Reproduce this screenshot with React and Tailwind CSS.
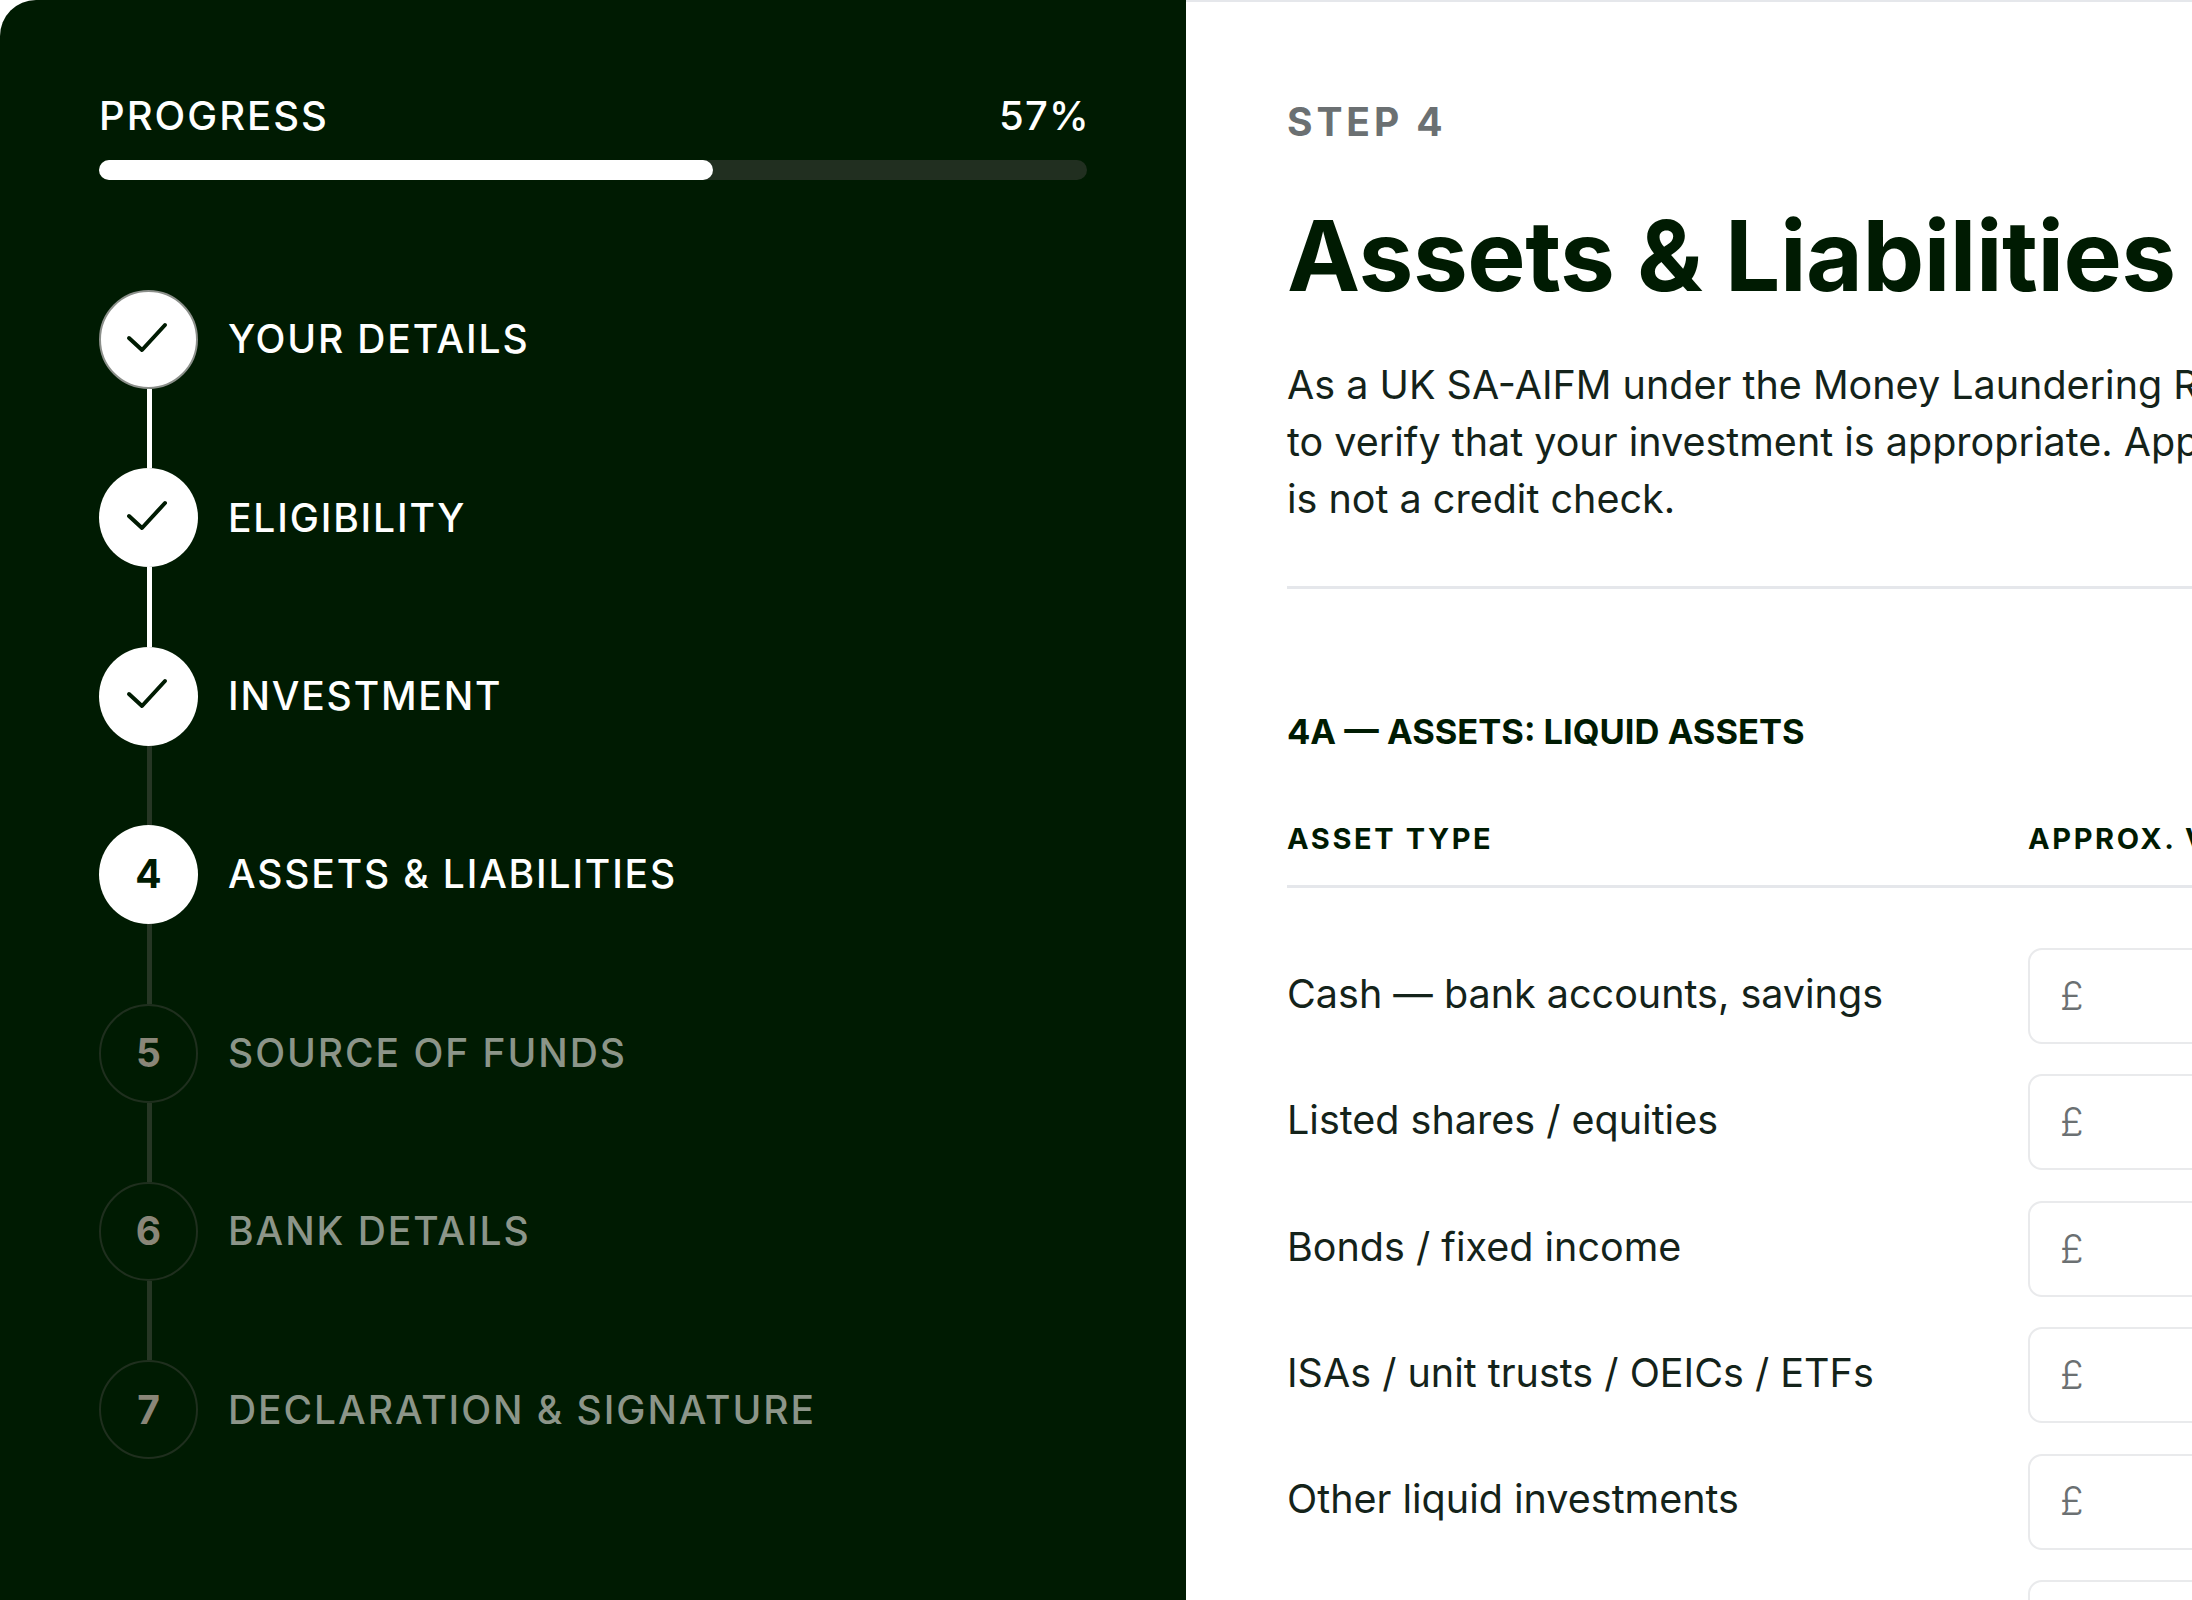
import React from "react";

const steps = [
  { n: 1, label: "YOUR DETAILS", state: "done", ring: true },
  { n: 2, label: "ELIGIBILITY", state: "done" },
  { n: 3, label: "INVESTMENT", state: "done" },
  { n: 4, label: "ASSETS & LIABILITIES", state: "current" },
  { n: 5, label: "SOURCE OF FUNDS", state: "todo" },
  { n: 6, label: "BANK DETAILS", state: "todo" },
  { n: 7, label: "DECLARATION & SIGNATURE", state: "todo" },
];

const assets = [
  "Cash — bank accounts, savings",
  "Listed shares / equities",
  "Bonds / fixed income",
  "ISAs / unit trusts / OEICs / ETFs",
  "Other liquid investments",
];

const Check = () => (
  <svg className="w-[42px] h-[31px] -ml-[3px] -mt-[5px]" viewBox="0 0 42 31" fill="none">
    <path d="M3 16 L16 28 L39 3" stroke="#001b02" strokeWidth="4" strokeLinecap="round" strokeLinejoin="round" />
  </svg>
);

const Step = ({ step, last, lineOn }) => {
  const todo = step.state === "todo";
  return (
    <div className="flex gap-[30px]">
      <div className="flex flex-col w-[99px]">
        <div
          className={
            todo
              ? "w-[99px] h-[99px] rounded-full border-2 border-[#1f2f1e] flex items-center justify-center text-[39px] font-bold text-[#8a8678]"
              : step.ring
              ? "w-[99px] h-[99px] rounded-full bg-white border-2 border-[#8b8f8a] flex items-center justify-center text-[39px] font-bold text-[#001b02]"
              : "w-[99px] h-[99px] rounded-full bg-white flex items-center justify-center text-[39px] font-bold text-[#001b02]"
          }
        >
          {step.state === "done" ? <Check /> : step.n}
        </div>
        {!last && (
          <div className={lineOn ? "w-[5px] h-[79.4px] ml-[48px] bg-white" : "w-[5px] h-[79.4px] ml-[48px] bg-[#263624]"} />
        )}
      </div>
      <div className={todo ? "h-[99px] flex items-center text-[39px] font-medium tracking-[0.05em] text-[#8c9589]" : "h-[99px] flex items-center text-[39px] font-medium tracking-[0.047em] text-white"}>
        {step.label}
      </div>
    </div>
  );
};

export default function App() {
  return (
    <div className="w-[2192px] h-[1600px] flex overflow-hidden bg-white font-['Inter',sans-serif]">
      {/* Sidebar */}
      <div className="w-[1186px] h-full shrink-0 bg-[#001b02] rounded-tl-[36px] pl-[99px] pr-[99px] pt-[92px]">
        <div className="flex justify-between text-[40px] leading-[48px] font-medium tracking-[0.05em] text-white">
          <span>PROGRESS</span>
          <span className="-mr-[3px] tracking-[0.03em]">57%</span>
        </div>
        <div className="mt-[20px] h-[20px] rounded-full bg-[#212f20]">
          <div className="w-[614px] h-[20px] rounded-full bg-white" />
        </div>
        <div className="mt-[110px]">
          {steps.map((s, i) => (
            <Step key={s.n} step={s} last={i === steps.length - 1} lineOn={i < 2} />
          ))}
        </div>
      </div>

      {/* Form */}
      <div className="flex-1 h-full overflow-hidden border-t-2 border-[#e5e7eb] pl-[101px] pt-[96px]">
        <div className="w-[1300px]">
          <p className="text-[39px] leading-[48px] font-bold tracking-[0.1em] text-[#6b7072]">STEP 4</p>
          <h1 className="mt-[55px] text-[98px] leading-[110px] font-bold tracking-[-0.005em] text-[#001b02]">Assets &amp; Liabilities</h1>
          <p className="mt-[46px] text-[39.5px] leading-[57px] text-[#14231a] whitespace-nowrap">
            As a UK SA-AIFM under the Money Laundering Regulations, we are required
            <br />
            to verify that your investment is appropriate. Approximate figures are fine — this
            <br />
            is not a credit check.
          </p>
          <div className="mt-[58px] h-[3px] bg-[#e5e7eb]" />

          <h2 className="mt-[121px] text-[34.5px] leading-[44px] font-bold text-[#001b02]">4A — ASSETS: LIQUID ASSETS</h2>

          <div className="mt-[65px] grid grid-cols-[741px_1fr] text-[29px] leading-[40px] font-bold tracking-[0.09em] text-[#001b02] pb-[26px] border-b-[3px] border-[#e5e7eb]">
            <span>ASSET TYPE</span>
            <span>APPROX. VALUE</span>
          </div>

          <div className="mt-[60px] flex flex-col gap-[30.4px]">
            {[...assets, ""].map((a, i) => (
              <div key={i} className="grid grid-cols-[741px_1fr] items-center">
                <span className="text-[39.5px] text-[#14231a] pb-[3px]">{a}</span>
                <div className="h-[96px] border-2 border-[#e9eaec] rounded-[14px] pl-[30px] flex items-center text-[39px] font-light text-[#6b7072]">
                  £
                </div>
              </div>
            ))}
          </div>
        </div>
      </div>
    </div>
  );
}
